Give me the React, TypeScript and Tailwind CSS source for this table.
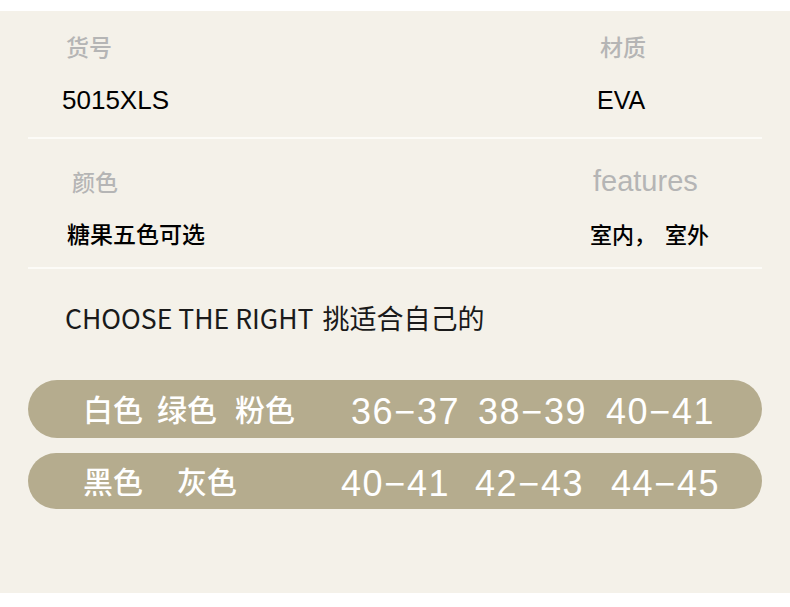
import React from "react";

const cjk = { fontFamily: '"Noto Sans CJK SC", "Noto Sans", sans-serif' };
const arial = { fontFamily: '"Liberation Sans", Arial, "Noto Sans CJK SC", sans-serif' };

function Divider() {
  return <div className="ml-[28px] h-[2px] w-[734px] bg-[#fcfbf7]" />;
}

function Pill({ children, h }: { children: React.ReactNode; h: string }) {
  return (
    <div className={`ml-[28px] flex w-[734px] items-center rounded-full bg-[#b5ac8e] pl-[55px] text-white ${h}`}>
      <div className="flex items-baseline">{children}</div>
    </div>
  );
}

const numCls = "text-[36px] leading-none tracking-[1.6px] translate-y-[3px]";
const cnCls = "text-[30px] leading-none font-medium";

function Num({ a, b, w }: { a: string; b: string; w?: string }) {
  return (
    <span className={`${w ?? ""} ${numCls}`} style={arial}>
      {a}−{b}
    </span>
  );
}

export default function App() {
  return (
    <div className="h-[607px] w-[790px] overflow-hidden bg-white">
      <div className="mt-[11px] h-[582px] w-full bg-[#f4f1e9]">
        {/* Section 1 */}
        <div className="h-[126px] pt-[24px]">
          <div className="flex items-baseline" style={cjk}>
            <div className="w-[590px] pl-[66px] text-[23px] leading-none font-medium text-[#b5b5b5]">货号</div>
            <div className="pl-[10px] text-[23px] leading-none font-medium text-[#b5b5b5]">材质</div>
          </div>
          <div className="mt-[29px] flex items-baseline" style={arial}>
            <div className="w-[590px] pl-[62px] text-[26px] leading-none text-black">5015XLS</div>
            <div className="pl-[7px] text-[25px] leading-none text-black">EVA</div>
          </div>
        </div>
        <Divider />
        {/* Section 2 */}
        <div className="h-[128px] pt-[28px]">
          <div className="flex items-baseline">
            <div className="w-[590px] pl-[72px] text-[23px] leading-none font-medium text-[#b5b5b5]" style={cjk}>颜色</div>
            <div className="pl-[3px] text-[29px] leading-none text-[#b5b5b5]" style={arial}>features</div>
          </div>
          <div className="mt-[26px] flex items-baseline" style={cjk}>
            <div className="w-[590px] pl-[67px] text-[23px] leading-none font-medium text-black">糖果五色可选</div>
            <div className="pl-[0px] text-[22px] leading-none font-medium text-black">
              室内，<span className="ml-[9px]">室外</span>
            </div>
          </div>
        </div>
        <Divider />
        {/* Heading */}
        <div className="h-[111px] pt-[35px]" style={cjk}>
          <div className="flex items-baseline pl-[65px] leading-none font-normal text-[#1a1a1a]">
            <span className="text-[26.6px]">CHOOSE THE RIGHT</span>
            <span className="ml-[9px] text-[27px]">挑适合自己的</span>
          </div>
        </div>
        {/* Pills */}
        <div className="flex flex-col gap-[15px]">
          <Pill h="h-[58px]">
            <span className={`w-[74px] ${cnCls}`} style={cjk}>白色</span>
            <span className={`w-[78px] ${cnCls}`} style={cjk}>绿色</span>
            <span className={`w-[116px] ${cnCls}`} style={cjk}>粉色</span>
            <Num a="36" b="37" w="w-[127px]" />
            <Num a="38" b="39" w="w-[128px]" />
            <Num a="40" b="41" />
          </Pill>
          <Pill h="h-[56px]">
            <span className={`w-[94px] ${cnCls}`} style={cjk}>黑色</span>
            <span className={`w-[164px] ${cnCls}`} style={cjk}>灰色</span>
            <Num a="40" b="41" w="w-[134px]" />
            <Num a="42" b="43" w="w-[136px]" />
            <Num a="44" b="45" />
          </Pill>
        </div>
      </div>
    </div>
  );
}
